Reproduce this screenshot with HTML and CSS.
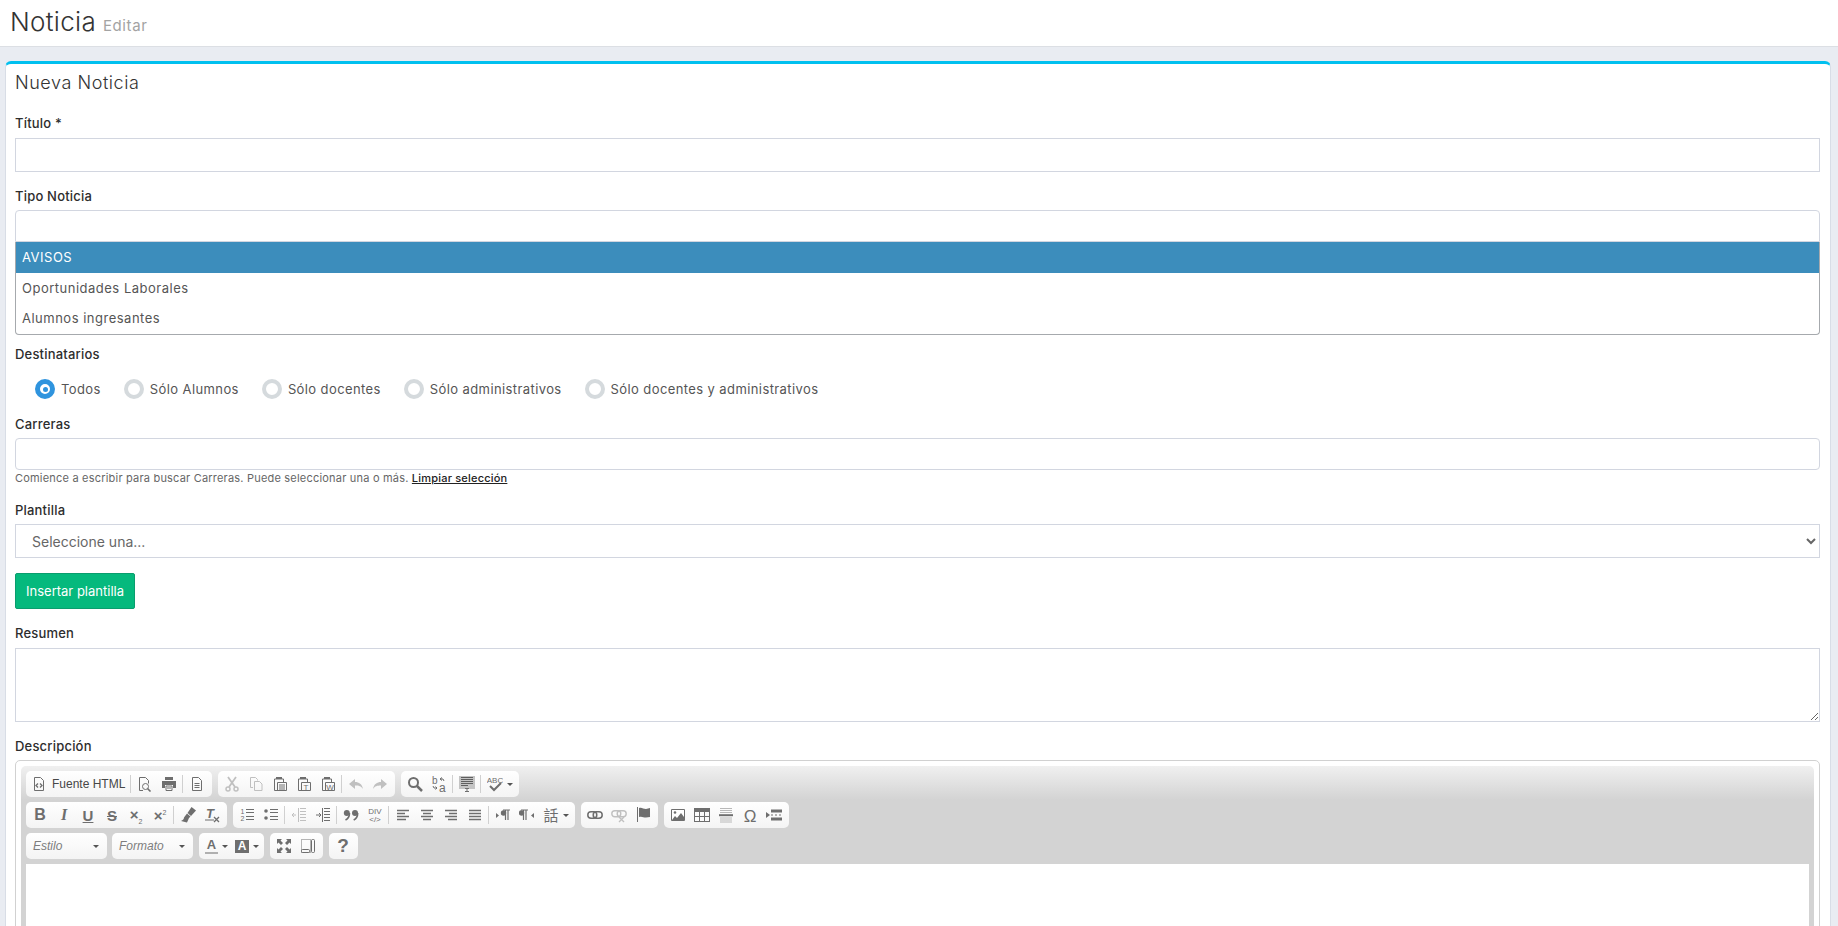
FILE: index.html
```html
<!DOCTYPE html>
<html lang="es">
<head>
<meta charset="utf-8">
<title>Noticia Editar</title>
<link rel="stylesheet" href="styles.css">
</head>
<body>
<svg class="sprite" aria-hidden="true">
  <symbol id="i-source" viewBox="0 0 16 16"><path d="M3.5 1.5h6l3 3v10h-9z" fill="none" stroke="currentColor"/><path d="M7 7.5 5 9.500l2 2M9 7.500l2 2-2 2" fill="none" stroke="currentColor" stroke-width="1.300"/></symbol>
  <symbol id="i-preview" viewBox="0 0 16 16"><path d="M6 14.500H2.500v-13h6l3 3v3" fill="none" stroke="currentColor"/><circle cx="8.500" cy="10.500" r="3" fill="none" stroke="currentColor"/><path d="m10.500 12.500 3 3" stroke="currentColor" stroke-width="1.600"/></symbol>
  <symbol id="i-print" viewBox="0 0 16 16"><path d="M4 1h8v3H4zM1 5h14v7h-3V9H4v3H1z" fill="currentColor"/><path d="M5 10h6v4.500H5z" fill="none" stroke="currentColor"/><path d="M6 12h4" stroke="currentColor"/></symbol>
  <symbol id="i-newpage" viewBox="0 0 16 16"><path d="M3.500 1.500h6l3 3v10h-9z" fill="none" stroke="currentColor"/><path d="M5.500 7.500h5M5.500 9.500h5M5.500 11.500h5" stroke="currentColor"/></symbol>
  <symbol id="i-cut" viewBox="0 0 16 16"><circle cx="4" cy="13" r="2" fill="none" stroke="currentColor" stroke-width="1.500"/><circle cx="12" cy="13" r="2" fill="none" stroke="currentColor" stroke-width="1.500"/><path d="M5 11 12 1M11 11 4 1" stroke="currentColor" stroke-width="1.800"/></symbol>
  <symbol id="i-copy" viewBox="0 0 16 16"><path d="M2.500 1.500h5l2 2v1M5 11.500H2.500v-10" fill="none" stroke="currentColor"/><path d="M6.500 5.500h5l2.500 2.500v6.500H6.500z" fill="none" stroke="currentColor"/></symbol>
  <symbol id="i-paste" viewBox="0 0 16 16"><path d="M4 3H2.500v11.500H6M10 3h1.500v3" fill="none" stroke="currentColor"/><path d="M4 3V1h6v2.500H4z" fill="currentColor"/><path d="M5.500 6.500h9v8h-9z" fill="none" stroke="currentColor"/><path d="M7 9h6M7 11h6M7 13h6" stroke="currentColor"/></symbol>
  <symbol id="i-pastetext" viewBox="0 0 16 16"><path d="M4 3H2.500v11.500H6M10 3h1.500v3" fill="none" stroke="currentColor"/><path d="M4 3V1h6v2.500H4z" fill="currentColor"/><path d="M5.500 6.500h9v8h-9z" fill="none" stroke="currentColor"/><text x="10" y="13.500" class="g7">T</text></symbol>
  <symbol id="i-pasteword" viewBox="0 0 16 16"><path d="M4 3H2.500v11.500H6M10 3h1.500v3" fill="none" stroke="currentColor"/><path d="M4 3V1h6v2.500H4z" fill="currentColor"/><path d="M5.500 6.500h9v8h-9z" fill="none" stroke="currentColor"/><text x="10" y="13.500" class="g7">W</text></symbol>
  <symbol id="i-undo" viewBox="0 0 16 16"><path d="M1 8l6-5v3c4 0 7 2 8 7-2-3-4-3.500-8-3.500V13z" fill="currentColor"/></symbol>
  <symbol id="i-redo" viewBox="0 0 16 16"><path d="M15 8 9 3v3c-4 0-7 2-8 7 2-3 4-3.500 8-3.500V13z" fill="currentColor"/></symbol>
  <symbol id="i-find" viewBox="0 0 16 16"><circle cx="6.500" cy="6.500" r="4.500" fill="none" stroke="currentColor" stroke-width="2"/><path d="m10 10 5 5" stroke="currentColor" stroke-width="2.500"/></symbol>
  <symbol id="i-replace" viewBox="0 0 16 16"><text x="1" y="8" class="g10">b</text><text x="8" y="16" class="g12">a</text><path d="M9 3h3l1 2M11 1.500 9 3l2 1.500M2 10l1 2h3M4.500 10.500 6 12l-1.500 1.500" fill="none" stroke="currentColor"/></symbol>
  <symbol id="i-selectall" viewBox="0 0 16 16"><path d="M0 0h16v13H10v-1H6v1H0z" fill="#c4c4c4"/><path d="M2 1.500h12M2 3.500h12M2 5.500h12M2 7.500h12M2 9.500h7" stroke="#5f5f5f"/><path d="M6 12.500h4M8 12.500v3M6 15.500h4" stroke="currentColor"/></symbol>
  <symbol id="i-scayt" viewBox="0 0 16 16"><text x="8" y="7" class="g8c">ABC</text><path d="m3 10 4 4 7-7" fill="none" stroke="currentColor" stroke-width="2"/></symbol>
  <symbol id="i-brush" viewBox="0 0 16 16"><path d="M11.500 0 16 3.500 11 9 7.500 6z" fill="currentColor"/><path d="M7 6.500l3.500 3-1.500 1.500L7 15.500 1 14c2-1 3-2 3-3.500z" fill="currentColor"/></symbol>
  <symbol id="i-removeformat" viewBox="0 0 16 16"><text x="6" y="11" class="g13i">T</text><path d="M1 13h9" stroke="currentColor"/><path d="m10 10 5 5M15 10l-5 5" stroke="currentColor" stroke-width="1.300"/></symbol>
  <symbol id="i-numlist" viewBox="0 0 16 16"><text x="3.500" y="7" class="g7c">1</text><text x="3.500" y="14" class="g7c">2</text><path d="M7 2.500h8M7 5.500h8M7 9.500h8M7 12.500h8" stroke="currentColor"/></symbol>
  <symbol id="i-bullist" viewBox="0 0 16 16"><circle cx="3" cy="4" r="1.800" fill="currentColor"/><circle cx="3" cy="11" r="1.800" fill="currentColor"/><path d="M7 2.500h8M7 5.500h8M7 9.500h8M7 12.500h8" stroke="currentColor"/></symbol>
  <symbol id="i-outdent" viewBox="0 0 16 16"><path d="M9 1.500h6M9 4.500h6M9 7.500h6M9 10.500h6M9 13.500h6M7.500 1v14" stroke="currentColor"/><path d="M1 8h4M3 6 1 8l2 2" fill="none" stroke="currentColor"/></symbol>
  <symbol id="i-indent" viewBox="0 0 16 16"><path d="M9 1.500h6M9 4.500h6M9 7.500h6M9 10.500h6M9 13.500h6M7.500 1v14" stroke="currentColor"/><path d="M1 8h5M4 6l2 2-2 2" fill="none" stroke="currentColor"/></symbol>
  <symbol id="i-quote" viewBox="0 0 16 16"><circle cx="3.800" cy="6" r="3" fill="currentColor"/><circle cx="12" cy="6" r="3" fill="currentColor"/><path d="M6.500 6c0 4-2 6-4 7M14.700 6c0 4-2 6-4 7" fill="none" stroke="currentColor" stroke-width="1.600"/></symbol>
  <symbol id="i-div" viewBox="0 0 16 16"><text x="8" y="7" class="g8c">DIV</text><text x="8" y="15" class="g8c">&lt;/&gt;</text></symbol>
  <symbol id="i-left" viewBox="0 0 16 16"><path d="M2 3.500h12M2 6.500h8M2 9.500h12M2 12.500h9" stroke="currentColor" stroke-width="1.700"/></symbol>
  <symbol id="i-center" viewBox="0 0 16 16"><path d="M2 3.500h12M4 6.500h8M2 9.500h12M4 12.500h8" stroke="currentColor" stroke-width="1.700"/></symbol>
  <symbol id="i-right" viewBox="0 0 16 16"><path d="M2 3.500h12M6 6.500h8M2 9.500h12M5 12.500h9" stroke="currentColor" stroke-width="1.700"/></symbol>
  <symbol id="i-justify" viewBox="0 0 16 16"><path d="M2 3.500h12M2 6.500h12M2 9.500h12M2 12.500h12" stroke="currentColor" stroke-width="1.700"/></symbol>
  <symbol id="i-ltr" viewBox="0 0 16 16"><path d="m1 6 3 2.500L1 11z" fill="currentColor"/><path d="M8 3h7M10.500 3v10M13 3v10" stroke="currentColor" stroke-width="1.200"/><circle cx="8.500" cy="6" r="2.700" fill="currentColor"/></symbol>
  <symbol id="i-rtl" viewBox="0 0 16 16"><path d="M15 6l-3 2.500 3 2.500z" fill="currentColor"/><path d="M2 3h7M4.500 3v10M7 3v10" stroke="currentColor" stroke-width="1.200"/><circle cx="2.500" cy="6" r="2.700" fill="currentColor"/></symbol>
  <symbol id="i-lang" viewBox="0 0 16 16"><text x="8" y="14" class="g15cjk">話</text></symbol>
  <symbol id="i-link" viewBox="0 0 16 16"><rect x=".8" y="4.800" width="9" height="6.400" rx="3.200" fill="none" stroke="currentColor" stroke-width="1.500"/><rect x="6.200" y="4.800" width="9" height="6.400" rx="3.200" fill="none" stroke="currentColor" stroke-width="1.500"/></symbol>
  <symbol id="i-unlink" viewBox="0 0 16 16"><rect x=".8" y="3.800" width="9" height="6" rx="3" fill="none" stroke="currentColor" stroke-width="1.400"/><rect x="6.200" y="3.800" width="9" height="6" rx="3" fill="none" stroke="currentColor" stroke-width="1.400"/><path d="m8 10 5 5M13 10l-5 5" stroke="currentColor" stroke-width="1.400"/></symbol>
  <symbol id="i-anchor" viewBox="0 0 16 16"><path d="M2.500 0v15" stroke="currentColor"/><path d="M4 1c3-1 4 1 7 1l4-1v9l-4 .5C8 10.500 7 9 4 10z" fill="currentColor"/></symbol>
  <symbol id="i-image" viewBox="0 0 16 16"><path d="M1.500 2.500h13v11h-13z" fill="#fff" stroke="currentColor"/><path d="M2 13l3-4 2 2 4-5 3 4v3z" fill="currentColor"/><circle cx="5" cy="5.500" r="1.300" fill="currentColor"/></symbol>
  <symbol id="i-table" viewBox="0 0 16 16"><path d="M0 1h16v14H0z" fill="currentColor"/><path d="M1 5h4v4H1zM6 5h4v4H6zM11 5h4v4h-4zM1 10h4v4H1zM6 10h4v4H6zM11 10h4v4h-4z" fill="#fbfbfb"/></symbol>
  <symbol id="i-hr" viewBox="0 0 16 16"><path d="M2 1.500h12M2 3.500h12M2 5.500h12M2 11h12M2 13h12M2 15h12" stroke="#b8b8b8"/><path d="M1 8.200h14" stroke="currentColor" stroke-width="2"/></symbol>
  <symbol id="i-omega" viewBox="0 0 16 16"><text x="8" y="14.500" class="g15">Ω</text></symbol>
  <symbol id="i-pagebreak" viewBox="0 0 16 16"><path d="m0 5 4 3-4 3z" fill="currentColor"/><path d="M5 2.500h11v3H5zM5 10.500h11v3H5z" fill="currentColor"/><path d="M5 8h2M9 8h2M13 8h2" stroke="currentColor"/></symbol>
  <symbol id="i-max" viewBox="0 0 16 16"><path d="M1 1h5L4.500 2.500l2.500 2.500-2 2-2.500-2.500L1 6zM15 1v5l-1.500-1.500L11 7 9 5l2.500-2.500L10 1zM1 15v-5l1.500 1.500L5 9l2 2-2.500 2.500L6 15zM15 15h-5l1.500-1.500L9 11l2-2 2.500 2.500L15 10z" fill="currentColor"/></symbol>
  <symbol id="i-blocks" viewBox="0 0 16 16"><path d="M1.500 1.500h9v13h-9z" fill="none" stroke="currentColor" stroke-dasharray="1 1"/><rect x="11.500" y="1.500" width="3" height="13" rx="1" fill="none" stroke="currentColor"/><rect x="1.500" y="11.500" width="8" height="3" rx="1" fill="none" stroke="currentColor"/></symbol>
</svg>

<header class="page-head">
  <h1 class="page-title">Noticia</h1>
  <small class="page-sub">Editar</small>
</header>

<main class="card">
  <h2 class="card-title">Nueva Noticia</h2>
  <form class="form">
    <label class="lbl lbl-titulo">Título *</label>
    <input class="ctl ctl-34" type="text">

    <label class="lbl lbl-tipo">Tipo Noticia</label>
    <input class="ctl ctl-round-top" type="text">
    <ul class="listbox">
      <li class="opt opt-on">AVISOS</li>
      <li class="opt">Oportunidades Laborales</li>
      <li class="opt">Alumnos ingresantes</li>
    </ul>

    <label class="lbl lbl-dest">Destinatarios</label>
    <div class="radios">
      <span class="radio radio-on"></span><span class="radio-text">Todos</span>
      <span class="radio"></span><span class="radio-text">Sólo Alumnos</span>
      <span class="radio"></span><span class="radio-text">Sólo docentes</span>
      <span class="radio"></span><span class="radio-text">Sólo administrativos</span>
      <span class="radio"></span><span class="radio-text">Sólo docentes y administrativos</span>
    </div>

    <label class="lbl lbl-carr">Carreras</label>
    <input class="ctl ctl-round" type="text">
    <p class="help">Comience a escribir para buscar Carreras. Puede seleccionar una o más. <a class="help-link" href="#">Limpiar selección</a></p>

    <label class="lbl lbl-plan">Plantilla</label>
    <select class="ctl ctl-34 ctl-select"><option>Seleccione una...</option></select>
    <button class="btn-green" type="button">Insertar plantilla</button>

    <label class="lbl lbl-res">Resumen</label>
    <textarea class="ctl ctl-area"></textarea>

    <label class="lbl lbl-desc">Descripción</label>
    <div class="editor">
      <div class="tb">
        <div class="tb-row">
          <div class="grp">
            <a class="b b-src"><svg class="ico"><use href="#i-source"/></svg><span class="b-label">Fuente HTML</span></a><i class="sep"></i>
            <a class="b"><svg class="ico"><use href="#i-preview"/></svg></a>
            <a class="b"><svg class="ico"><use href="#i-print"/></svg></a><i class="sep"></i>
            <a class="b"><svg class="ico"><use href="#i-newpage"/></svg></a>
          </div>
          <div class="grp">
            <a class="b off"><svg class="ico"><use href="#i-cut"/></svg></a>
            <a class="b off"><svg class="ico"><use href="#i-copy"/></svg></a>
            <a class="b"><svg class="ico"><use href="#i-paste"/></svg></a>
            <a class="b"><svg class="ico"><use href="#i-pastetext"/></svg></a>
            <a class="b"><svg class="ico"><use href="#i-pasteword"/></svg></a><i class="sep"></i>
            <a class="b off"><svg class="ico"><use href="#i-undo"/></svg></a>
            <a class="b off"><svg class="ico"><use href="#i-redo"/></svg></a>
          </div>
          <div class="grp">
            <a class="b"><svg class="ico"><use href="#i-find"/></svg></a>
            <a class="b"><svg class="ico"><use href="#i-replace"/></svg></a><i class="sep"></i>
            <a class="b"><svg class="ico"><use href="#i-selectall"/></svg></a><i class="sep"></i>
            <a class="b b-arrow"><svg class="ico"><use href="#i-scayt"/></svg><i class="caret"></i></a>
          </div>
        </div>
        <div class="tb-row">
          <div class="grp">
            <a class="b"><span class="t-b">B</span></a>
            <a class="b"><span class="t-i">I</span></a>
            <a class="b"><span class="t-u">U</span></a>
            <a class="b"><span class="t-s">S</span></a>
            <a class="b"><span class="t-x">×<sub class="t-sub">2</sub></span></a>
            <a class="b"><span class="t-x">×<sup class="t-sup">2</sup></span></a><i class="sep"></i>
            <a class="b"><svg class="ico"><use href="#i-brush"/></svg></a>
            <a class="b"><svg class="ico"><use href="#i-removeformat"/></svg></a>
          </div>
          <div class="grp">
            <a class="b"><svg class="ico"><use href="#i-numlist"/></svg></a>
            <a class="b"><svg class="ico"><use href="#i-bullist"/></svg></a><i class="sep"></i>
            <a class="b off"><svg class="ico"><use href="#i-outdent"/></svg></a>
            <a class="b"><svg class="ico"><use href="#i-indent"/></svg></a><i class="sep"></i>
            <a class="b"><svg class="ico"><use href="#i-quote"/></svg></a>
            <a class="b"><svg class="ico"><use href="#i-div"/></svg></a><i class="sep"></i>
            <a class="b"><svg class="ico"><use href="#i-left"/></svg></a>
            <a class="b"><svg class="ico"><use href="#i-center"/></svg></a>
            <a class="b"><svg class="ico"><use href="#i-right"/></svg></a>
            <a class="b"><svg class="ico"><use href="#i-justify"/></svg></a><i class="sep"></i>
            <a class="b"><svg class="ico"><use href="#i-ltr"/></svg></a>
            <a class="b"><svg class="ico"><use href="#i-rtl"/></svg></a>
            <a class="b b-arrow"><svg class="ico"><use href="#i-lang"/></svg><i class="caret"></i></a>
          </div>
          <div class="grp">
            <a class="b"><svg class="ico"><use href="#i-link"/></svg></a>
            <a class="b off"><svg class="ico"><use href="#i-unlink"/></svg></a>
            <a class="b"><svg class="ico"><use href="#i-anchor"/></svg></a>
          </div>
          <div class="grp">
            <a class="b"><svg class="ico"><use href="#i-image"/></svg></a>
            <a class="b"><svg class="ico"><use href="#i-table"/></svg></a>
            <a class="b"><svg class="ico"><use href="#i-hr"/></svg></a>
            <a class="b"><svg class="ico"><use href="#i-omega"/></svg></a>
            <a class="b"><svg class="ico"><use href="#i-pagebreak"/></svg></a>
          </div>
        </div>
        <div class="tb-row">
          <div class="grp combo"><span class="combo-text">Estilo</span><i class="caret"></i></div>
          <div class="grp combo"><span class="combo-text">Formato</span><i class="caret"></i></div>
          <div class="grp">
            <a class="b b-color"><span class="t-color">A</span><i class="caret"></i></a>
            <a class="b b-color"><span class="t-bg">A</span><i class="caret"></i></a>
          </div>
          <div class="grp">
            <a class="b"><svg class="ico"><use href="#i-max"/></svg></a>
            <a class="b"><svg class="ico"><use href="#i-blocks"/></svg></a>
          </div>
          <div class="grp">
            <a class="b"><span class="t-help">?</span></a>
          </div>
        </div>
        <div class="edit-area"></div>
      </div>
    </div>
  </form>
</main>
</body>
</html>
```
FILE: styles.css
```css
* { box-sizing: border-box; }
html, body { height: 100%; overflow: hidden; }
body {
  margin: 0;
  background: #e9ecf2;
  font-family: Inter, "Liberation Sans", sans-serif;
  font-size: 13px;
  color: #333;
}
.sprite { display: none; }

.page-head {
  height: 47px;
  background: #fff;
  border-bottom: 1px solid #dcdfe4;
  display: flex;
  align-items: baseline;
  padding: 4px 0 0 10px;
  gap: 7px;
}
.page-title { margin: 0; font-size: 26px; font-weight: 300; line-height: 36px; color: #333; letter-spacing: .3px; }
.page-sub { font-size: 15px; color: #a3a3a3; font-weight: 400; letter-spacing: .6px; }

.card {
  margin: 14px 7px 0 5px;
  height: 1200px;
  background: #fff;
  border-top: 3px solid #00c0ef;
  border-left: 1px solid #d8dde6;
  border-right: 1px solid #d8dde6;
  border-radius: 6px 6px 0 0;
  padding: 0 10px 0 9px;
}
.card-title { margin: 0; font-size: 18px; font-weight: 300; line-height: 38px; height: 38px; color: #333; letter-spacing: .55px; }
.form { display: flex; flex-direction: column; }

.lbl { display: block; font-size: 13px; font-weight: 500; line-height: 16px; color: #2d2d2d; margin-bottom: 6px; letter-spacing: .2px; }
.lbl-titulo { margin-top: 13px; margin-bottom: 7px; }
.lbl-tipo { margin-top: 16px; }
.lbl-dest { margin-top: 11px; margin-bottom: 17px; }
.lbl-carr { margin-top: 17px; }
.lbl-plan { margin-top: 18px; }
.lbl-res { margin-top: 16px; margin-bottom: 7px; }
.lbl-desc { margin-top: 16px; }

.ctl {
  display: block;
  width: 100%;
  height: 32px;
  background: #fff;
  border: 1px solid #d2d6e0;
  font-family: inherit;
  font-size: 14px;
  color: #666;
  outline: none;
}
.ctl-34 { height: 34px; }
.ctl-round { border-radius: 4px; }
.ctl-round-top { border-radius: 4px 4px 0 0; }
.ctl-select { padding-left: 12px; }
.ctl-area { height: 74px; resize: vertical; }

.listbox {
  list-style: none;
  margin: 0;
  padding: 0;
  height: 93px;
  border: 1px solid #a6a9ad;
  border-top: 0;
  border-radius: 0 0 4px 4px;
  overflow: hidden;
}
.opt { height: 30px; line-height: 30px; padding-left: 6px; font-size: 13px; color: #555; letter-spacing: .5px; }
.opt-on { height: 31px; background: #3c8dbc; color: #fff; }

.radios { display: flex; align-items: center; height: 20px; padding-left: 20px; }
.radio {
  width: 20px;
  height: 20px;
  border-radius: 50%;
  border: 4px solid #d5dadd;
  background: #fff;
  flex: none;
}
.radio-on { border: 5px solid #2f94de; position: relative; }
.radio-on::after {
  content: "";
  position: absolute;
  left: 2.500px;
  top: 2.500px;
  width: 5px;
  height: 5px;
  border-radius: 50%;
  background: #2f94de;
}
.radio-text { margin: 0 23px 0 6px; font-size: 13px; color: #555; letter-spacing: .4px; }

.help { margin: 2px 0 0; font-size: 11px; line-height: 12px; height: 12px; color: #666; letter-spacing: .2px; }
.help-link { color: #222; font-weight: 500; text-decoration: underline; }

.btn-green {
  align-self: flex-start;
  width: 120px;
  height: 36px;
  margin-top: 15px;
  background: #05b97d;
  border: 1px solid #0a9d6e;
  border-radius: 2px;
  color: #fff;
  font-family: inherit;
  font-size: 13px;
  padding: 0;
}

.editor {
  border: 1px solid #d1d1d1;
  border-radius: 5px;
  padding: 5px;
  height: 500px;
  background: #fff;
}
.tb {
  height: 100%;
  border-radius: 5px 5px 0 0;
  background: linear-gradient(#f0f0f0, #d3d3d3 34px);
  background-color: #d3d3d3;
  padding: 5px;
}
.tb-row { display: flex; gap: 6px; height: 26px; margin-bottom: 5px; }
.grp {
  display: flex;
  align-items: center;
  height: 26px;
  padding: 0 3px 0 2px;
  border-radius: 5px;
  background: linear-gradient(#fff, #f4f4f4);
}
.b {
  display: flex;
  align-items: center;
  justify-content: center;
  width: 24px;
  height: 26px;
  color: #6e6e6e;
  flex: none;
}
.b.off { color: #c0c0c0; }
.b-src { width: 101px; justify-content: flex-start; padding-left: 3px; gap: 5px; }
.b-label { font: 12px "Liberation Sans", Arial, sans-serif; color: #474747; white-space: nowrap; }
.b-arrow { width: 33px; justify-content: flex-start; padding-left: 4px; gap: 4px; }
.b-color { width: 30px; justify-content: flex-start; padding-left: 4px; gap: 4px; }
.ico { width: 16px; height: 16px; display: block; flex: none; }
.sep { width: 1px; height: 18px; margin: 0 2px 0 1px; background: #d0d0d0; flex: none; }
.caret { width: 0; height: 0; border: 3px solid transparent; border-top-color: #555; border-bottom: 0; flex: none; }

.t-b, .t-i, .t-u, .t-s, .t-x, .t-help, .t-color, .t-bg { font-family: "Liberation Sans", Arial, sans-serif; color: #6e6e6e; font-weight: 700; }
.t-b { font-size: 16px; }
.t-i { font-family: "Liberation Serif", serif; font-size: 16px; font-style: italic; }
.t-u { font-size: 15px; text-decoration: underline; }
.t-s { font-size: 15px; text-decoration: line-through; }
.t-x { font-size: 15px; }
.t-sub, .t-sup { font-size: 7px; font-weight: 400; }
.t-help { font-size: 19px; }
.t-color { font-size: 13px; border-bottom: 2px solid #b0b0b0; line-height: 14px; width: 13px; text-align: center; }
.t-bg { font-size: 12px; background: #6e6e6e; color: #fff; width: 14px; height: 13px; line-height: 13px; text-align: center; }

.combo { justify-content: space-between; padding: 0 8px 0 7px; }
.combo:nth-child(1) { width: 81px; }
.combo:nth-child(2) { width: 81px; margin-left: -1px; }
.combo-text { font: italic 12px "Liberation Sans", Arial, sans-serif; color: #7d7d7d; }

.edit-area { background: #fff; height: 400px; }

symbol text { fill: currentColor; font-family: "Liberation Sans", Arial, sans-serif; }
.g7 { font-size: 8px; text-anchor: middle; }
.g7c { font-size: 7px; text-anchor: middle; }
.g8c { font-size: 8px; text-anchor: middle; }
.g10 { font-size: 10px; }
.g12 { font-size: 12px; }
.g13i { font-size: 13px; font-style: italic; font-weight: 700; text-anchor: middle; }
.g15 { font-size: 17px; text-anchor: middle; }
.g15cjk { font-family: "Noto Sans CJK TC", sans-serif; font-size: 15px; text-anchor: middle; }
```
